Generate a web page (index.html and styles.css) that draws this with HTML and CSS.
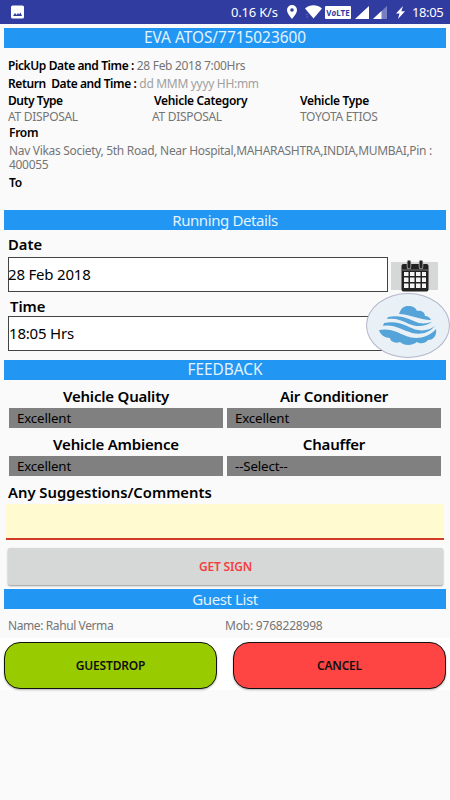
FILE: index.html
```html
<!DOCTYPE html>
<html lang="en">
<head>
    <meta charset="UTF-8">
    <meta name="viewport" content="width=device-width, initial-scale=1.0">
    <title>Duty Details</title>
    <link rel="stylesheet" href="styles.css">
</head>
<body>
    <header class="statusbar">
        <svg class="icon-photo" width="13" height="14" viewBox="0 0 13 14">
            <rect x="0" y="0.500" width="13" height="13" rx="1.500" fill="#fff"/>
            <path d="M2 11l2-3 1.500 2L7 8l1 1.500L9.500 7.500 11 11z" fill="#303c9f"/>
        </svg>
        <span class="speed">0.16 K/s</span>
        <svg class="icon-pin" width="10" height="14" viewBox="0 0 10 14">
            <path d="M5 0a5 5 0 0 0-5 5c0 3.600 5 9 5 9s5-5.400 5-9a5 5 0 0 0-5-5zm0 6.800a1.800 1.800 0 1 1 0-3.600 1.800 1.800 0 0 1 0 3.600z" fill="#fff"/>
        </svg>
        <svg class="icon-wifi" width="17" height="14" viewBox="0 0 17 14">
            <path d="M0 3.500C5 -0.800 12 -0.800 17 3.500L8.500 13.500z" fill="#fff"/>
            <path d="M1 9.500h2M1 12h2" stroke="#5c66b5" stroke-width="1"/>
        </svg>
        <span class="volte">V<i>o</i>LTE</span>
        <svg class="icon-signal" width="14" height="13" viewBox="0 0 14 13">
            <path d="M14 0v13H0z" fill="#fff"/>
        </svg>
        <svg class="icon-signal2" width="14" height="13" viewBox="0 0 14 13">
            <path d="M14 0v13H0z" fill="#7780c3"/>
            <path d="M8.500 5.100V13H0z" fill="#fff"/>
        </svg>
        <svg class="icon-bolt" width="9" height="13" viewBox="0 0 9 13">
            <path d="M7 0L0 7.500h3.500L2 13l7-7.800H5.300z" fill="#fff"/>
        </svg>
        <span class="clock">18:05</span>
    </header>

    <main class="content">
        <h2 class="bar bar-top">EVA ATOS/7715023600</h2>

        <section class="details">
            <p class="line"><b>PickUp Date and Time :</b> <span>28 Feb 2018 7:00Hrs</span></p>
            <p class="line"><b>Return&nbsp; Date and Time :</b> <span class="hint">dd MMM yyyy HH:mm</span></p>
            <div class="columns">
                <div class="duty"><b>Duty Type</b><span>AT DISPOSAL</span></div>
                <div class="category"><b>Vehicle Category</b><span>AT DISPOSAL</span></div>
                <div class="type"><b>Vehicle Type</b><span>TOYOTA ETIOS</span></div>
            </div>
            <b class="from">From</b>
            <p class="address">Nav Vikas Society, 5th Road, Near Hospital,MAHARASHTRA,INDIA,MUMBAI,Pin :<br>400055</p>
            <b class="to">To</b>
        </section>

        <h2 class="bar bar-running">Running Details</h2>

        <section class="running">
            <label class="field-label">Date</label>
            <div class="field-row">
                <div class="field date-field">28 Feb 2018</div>
                <button class="calendar">
                    <svg width="28" height="32" viewBox="0 0 28 32">
                        <rect x="0.500" y="4" width="27" height="27.500" rx="2" fill="#222"/>
                        <path d="M1 10h26" stroke="#777" stroke-width="1"/>
                        <path d="M3 12h4.500v4H3zm6 0h4.500v4H9zm6 0h4.500v4H15zm6 0h4v4h-4zM3 17.500h4.500v4.500H3zm6 0h4.500v4.500H9zm6 0h4.500v4.500H15zm6 0h4v4.500h-4zM3 23.500h4.500V28H3zm6 0h4.500V28H9zm6 0h4.500V28H15zm6 0h4V28h-4z" fill="#f4f4f4"/>
                        <path d="M8 2v5M20 2v5" stroke="#bbb" stroke-width="4.500" stroke-linecap="round"/>
                        <path d="M8 2v5M20 2v5" stroke="#222" stroke-width="3" stroke-linecap="round"/>
                    </svg>
                </button>
            </div>
            <label class="field-label time-label">Time</label>
            <div class="field">18:05 Hrs</div>
            <div class="bubble">
                <svg width="58" height="40" viewBox="0 0 58 40">
                    <path d="M20 8C22 2 25 0 29 0c5 0 8 2 9 5 5-1 8 2 8 5 3 0 5 2 6 4C40 14 31 8 20 8z" fill="#54a3d9"/>
                    <path d="M9 11C24 8 33 15 40 17c5 1 9 0 13-1-7 5-16 5-23 2-8-4-13-6-22-5z" fill="#54a3d9"/>
                    <path d="M5 17c14-3 22 3 30 6 8 3 16 1 21-3-6 7-14 9-23 7-10-3-18-9-29-7z" fill="#54a3d9"/>
                    <path d="M0 24c11-2 18 2 27 6 10 4 22 2 30-7 1 6-2 11-8 11-3 4-8 4-11 2-5 4-13 4-17 0-5 2-10-1-10-4-6 0-10-4-11-8z" fill="#54a3d9"/>
                </svg>
            </div>
        </section>

        <h2 class="bar bar-feedback">FEEDBACK</h2>

        <section class="feedback">
            <div><label>Vehicle Quality</label><div class="select">Excellent</div></div>
            <div><label>Air Conditioner</label><div class="select">Excellent</div></div>
            <div><label>Vehicle Ambience</label><div class="select">Excellent</div></div>
            <div><label>Chauffer</label><div class="select">--Select--</div></div>
        </section>
        <label class="field-label comments-label">Any Suggestions/Comments</label>
        <div class="comments"></div>
        <button class="sign">GET SIGN</button>

        <h2 class="bar bar-guests">Guest List</h2>
        <div class="guest">
            <span class="guest-name">Name: Rahul Verma</span>
            <span class="guest-mob">Mob: 9768228998</span>
        </div>
        <div class="actions">
            <button class="drop">GUESTDROP</button>
            <button class="cancel">CANCEL</button>
        </div>
    </main>
</body>
</html>
```
FILE: styles.css
```css
* {
    box-sizing: border-box;
}

body {
    margin: 0;
    width: 450px;
    height: 800px;
    overflow: hidden;
    background-color: #fafafa;
    font-family: "Noto Sans", sans-serif;
    font-size: 12px;
    color: #000;
}

h2, p {
    margin: 0;
    font-weight: normal;
}

b, label {
    font-weight: 600;
}

button {
    border: none;
    padding: 0;
    font-family: inherit;
}

svg {
    display: block;
    flex: none;
}

.statusbar {
    display: flex;
    align-items: center;
    height: 24px;
    padding-left: 11px;
    background-color: #303c9f;
    color: #fff;
    font-size: 13px;
    white-space: nowrap;
}

.speed {
    width: 48px;
    margin-left: 207px;
    letter-spacing: -0.2px;
}

.icon-pin {
    margin-left: 8px;
}

.icon-wifi {
    margin-left: 8px;
}

.volte {
    width: 26px;
    height: 13px;
    margin-left: 3px;
    border-radius: 1px;
    background-color: #fff;
    color: #303c9f;
    font-size: 8px;
    font-weight: bold;
    line-height: 13px;
    text-align: center;
}

.icon-signal {
    margin-left: 4px;
}

.icon-signal2 {
    margin-left: 4px;
}

.icon-bolt {
    margin-left: 9px;
}

.clock {
    margin-left: 7px;
    letter-spacing: -0.4px;
}

.content {
    padding: 4px 4px 0;
}

.bar {
    height: 20px;
    background-color: #2196f3;
    color: #e4f3fe;
    font-size: 15.4px;
    line-height: 20px;
    text-align: center;
}

.details {
    height: 162px;
    padding: 9px 4px 0;
    color: #757575;
    letter-spacing: -0.31px;
    white-space: nowrap;
}

.details b {
    color: #000;
}

.line {
    height: 18px;
    line-height: 18px;
}

.line b {
    letter-spacing: -0.4px;
}

.hint {
    color: #a0a0a0;
}

.columns {
    display: grid;
    grid-template-columns: 144px 148px 1fr;
    line-height: 16px;
}

.columns b, .columns span {
    display: block;
}

.duty b {
    letter-spacing: -0.45px;
}

.category b {
    padding-left: 2px;
}

.from, .to {
    display: block;
    padding-left: 1px;
    line-height: 16px;
}

.address {
    margin: 3px 0 3px 1px;
    line-height: 14px;
}

.bar-running, .bar-guests {
    font-size: 15px;
    letter-spacing: -0.4px;
}

.bar-running {
    margin-bottom: 4px;
}

.running {
    position: relative;
    height: 126px;
    padding-left: 4px;
}

.field-label {
    display: block;
    font-size: 14.8px;
    line-height: 20px;
}

.field-row {
    display: flex;
    margin: 3px 0 4px;
}

.field {
    width: 380px;
    height: 35px;
    border: 1px solid #444;
    background-color: #fff;
    font-size: 15px;
    letter-spacing: -0.2px;
    line-height: 33px;
}

.date-field {
    text-indent: -1px;
}

.calendar {
    display: flex;
    justify-content: center;
    width: 47px;
    height: 28px;
    margin: 5px 0 0 3px;
    background-color: #d6d7d7;
}

.calendar svg {
    margin-top: -2px;
}

.time-label {
    padding-left: 2px;
}

/* floating widget over the time field */
.bubble {
    position: absolute;
    top: 59px;
    left: 362px;
    display: flex;
    align-items: center;
    justify-content: center;
    width: 84px;
    height: 65px;
    border: 1px solid #b4b6cc;
    border-radius: 50%;
    background-color: #e9f0f6;
}

.feedback {
    display: grid;
    grid-template-columns: 214px 214px;
    column-gap: 4px;
    padding: 6px 0 0 5px;
    font-size: 15px;
}

.feedback label {
    display: block;
    height: 22px;
    letter-spacing: -0.2px;
    line-height: 20px;
    text-align: center;
}

.select {
    height: 20px;
    margin-bottom: 6px;
    padding-left: 8px;
    background-color: #808080;
    font-size: 13.3px;
    letter-spacing: -0.15px;
    line-height: 20px;
}

.comments-label {
    padding-left: 4px;
}

.comments {
    height: 36px;
    margin: 2px 2px 0;
    border-bottom: 2px solid #d23c26;
    background-color: #fffad0;
}

.sign {
    display: block;
    width: 435px;
    height: 37px;
    margin: 8px 0 0 4px;
    border-radius: 2px;
    background-color: #d6d7d7;
    box-shadow: 0 1px 2px rgba(0, 0, 0, 0.4);
    color: #f73f3f;
    font-size: 12px;
    font-weight: 600;
    letter-spacing: -0.2px;
}

.bar-guests {
    margin-top: 4px;
}

.guest {
    display: flex;
    height: 29px;
    padding-left: 4px;
    color: #757575;
    line-height: 34px;
}

.guest-name {
    width: 217px;
    letter-spacing: -0.4px;
}

.guest-mob {
    letter-spacing: -0.2px;
}

.actions {
    display: flex;
    justify-content: space-between;
    margin: 0 -4px;
    padding: 4px 4px 1px;
    background-color: #fff;
}

.actions button {
    width: 213px;
    height: 47px;
    border: 1px solid #111;
    border-radius: 16px;
    box-shadow: 0 1px 2px rgba(0, 0, 0, 0.3);
    color: #111;
    font-size: 12px;
    font-weight: 600;
    letter-spacing: -0.2px;
}

.actions .drop {
    background-color: #99cc00;
}

.actions .cancel {
    background-color: #ff4444;
}
```
